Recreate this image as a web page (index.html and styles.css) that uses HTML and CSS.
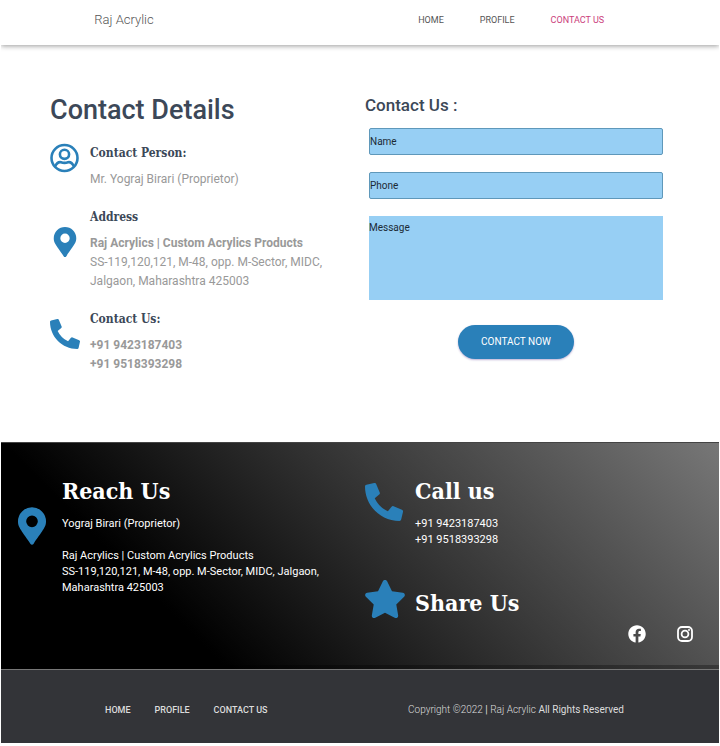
FILE: index.html
```html
<!DOCTYPE html>
<html lang="en">
<head>
<meta charset="utf-8">
<meta name="viewport" content="width=device-width, initial-scale=1">
<title>Raj Acrylic</title>
<link rel="stylesheet" href="styles.css">
</head>
<body>
<svg class="sprite" aria-hidden="true">
  <symbol id="pin" viewBox="0 0 384 512"><path d="M172 502C27 291 0 270 0 192a192 192 0 0 1 384 0c0 78-27 99-172 310a24 24 0 0 1-40 0zM192 272a80 80 0 1 0 0-160 80 80 0 0 0 0 160z"/></symbol>
  <symbol id="phone" viewBox="0 0 512 512"><path d="M18.900 24.500l104-24a24.200 24.200 0 0 1 27.500 13.900l48 112a24 24 0 0 1-6.900 28l-60.600 49.600a370.700 370.700 0 0 0 177.200 177.200l49.600-60.600a24 24 0 0 1 28-6.900l112 48a24.300 24.300 0 0 1 13.800 27.600l-24 104A24 24 0 0 1 464 512C207.900 512 0 304.500 0 48a24 24 0 0 1 18.900-23.500z"/></symbol>
  <symbol id="star" viewBox="20 0 536 512"><path d="M259.300 17.800L194 150.200 47.900 171.500c-26.200 3.800-36.700 36.100-17.700 54.600l105.700 103-25 145.500c-4.500 26.300 23.200 46 46.400 33.700L288 439.600l130.700 68.700c23.200 12.200 50.900-7.400 46.400-33.700l-25-145.500 105.700-103c19-18.500 8.500-50.800-17.700-54.600L382 150.200 316.700 17.800c-11.700-23.600-45.600-23.900-57.400 0z"/></symbol>
</svg>

<header class="topbar">
  <a class="brand" href="#">Raj Acrylic</a>
  <nav class="topnav" aria-label="Main">
    <a href="#">HOME</a>
    <a href="#">PROFILE</a>
    <a class="active" href="#">CONTACT US</a>
  </nav>
</header>

<main class="contact">
  <section class="details">
    <h1>Contact Details</h1>
    <div class="info">
      <svg class="info-icon outline" viewBox="0 0 30 30" aria-hidden="true"><circle cx="14.500" cy="15" r="13"/><circle cx="14.500" cy="11.300" r="4.600"/><path d="M5 23.500c1.500-3.200 4-4.700 6-4.300 2.400.9 4.600.9 7 0 2-.4 4.500 1.100 6 4.300"/></svg>
      <div>
        <h2>Contact Person:</h2>
        <p>Mr. Yograj Birari (Proprietor)</p>
      </div>
    </div>
    <div class="info">
      <svg class="info-icon lower" aria-hidden="true"><use href="#pin"/></svg>
      <div>
        <h2>Address</h2>
        <p><b>Raj Acrylics | Custom Acrylics Products</b><br>SS-119,120,121, M-48, opp. M-Sector, MIDC,<br>Jalgaon, Maharashtra 425003</p>
      </div>
    </div>
    <div class="info">
      <svg class="info-icon low" aria-hidden="true"><use href="#phone"/></svg>
      <div>
        <h2>Contact Us:</h2>
        <p><b>+91 9423187403<br>+91 9518393298</b></p>
      </div>
    </div>
  </section>

  <section class="enquiry">
    <h2>Contact Us :</h2>
    <form>
      <input type="text" placeholder="Name" aria-label="Name">
      <input type="tel" placeholder="Phone" aria-label="Phone">
      <textarea placeholder="Message" aria-label="Message"></textarea>
      <button type="button">CONTACT NOW</button>
    </form>
  </section>
</main>

<section class="reach">
  <div class="block">
    <svg class="reach-icon centred" aria-hidden="true"><use href="#pin"/></svg>
    <div>
      <h2>Reach Us</h2>
      <p>Yograj Birari (Proprietor)<br><br>Raj Acrylics | Custom Acrylics Products<br>SS-119,120,121, M-48, opp. M-Sector, MIDC, Jalgaon, Maharashtra 425003</p>
    </div>
  </div>
  <div class="side">
    <div class="block">
      <svg class="reach-icon" aria-hidden="true"><use href="#phone"/></svg>
      <div>
        <h2>Call us</h2>
        <p>+91 9423187403<br>+91 9518393298</p>
      </div>
    </div>
    <div class="block share">
      <svg class="reach-icon star" aria-hidden="true"><use href="#star"/></svg>
      <h2>Share Us</h2>
    </div>
    <div class="social">
      <a href="#" aria-label="Facebook"><svg viewBox="0 0 512 512"><path d="M504 256C504 119 393 8 256 8S8 119 8 256c0 123.800 90.700 226.400 209.200 245V327.700h-63V256h63v-54.600c0-62.200 37-96.500 93.700-96.500 27.100 0 55.500 4.800 55.500 4.800v61h-31.300c-30.800 0-40.400 19.100-40.400 38.700V256h68.800l-11 71.700h-57.800V501C413.300 482.400 504 379.800 504 256z"/></svg></a>
      <a href="#" aria-label="Instagram"><svg class="line" viewBox="0 0 18 18"><rect x="2" y="2" width="14" height="14" rx="4"/><circle cx="9" cy="9" r="3.400"/><circle class="dot" cx="13" cy="5" r="1"/></svg></a>
    </div>
  </div>
</section>

<footer class="footer">
  <nav aria-label="Footer">
    <a href="#">HOME</a>
    <a href="#">PROFILE</a>
    <a href="#">CONTACT US</a>
  </nav>
  <p>Copyright ©2022 <b>|</b> Raj Acrylic <b>All Rights Reserved</b></p>
</footer>
</body>
</html>
```
FILE: styles.css
```css
* { box-sizing: border-box; }

body {
  margin: 0 1px;
  background: #fff;
  color: #3c4858;
  font-family: Roboto, sans-serif;
}

h1, h2, p { margin: 0; }
a { color: inherit; text-decoration: none; }
.sprite { display: none; }

.topbar {
  display: flex;
  justify-content: space-between;
  padding: 10px 16% 15px 13%;
  box-shadow: 0 1px 5px rgba(0, 0, 0, .4);
}
.brand {
  color: #555;
  font-size: 13px;
  font-weight: 300;
  line-height: 20px;
}
.topnav {
  display: flex;
  gap: 36px;
  color: #555;
  font-size: 9px;
  line-height: 20px;
}
.topnav .active { color: #cb3e7c; }

.contact {
  display: grid;
  grid-template-columns: 315px 1fr;
  padding: 45px 56px 68px 49px;
}

.details h1 {
  margin-bottom: 13px;
  font-size: 27px;
  font-weight: 500;
  line-height: 40px;
}
.info {
  display: flex;
  align-items: flex-start;
  gap: 10px;
}
.info + .info { margin-top: 18px; }
.info-icon {
  flex: none;
  width: 30px;
  height: 30px;
  fill: #2a80b9;
}
.info-icon.outline {
  fill: none;
  stroke: #2a80b9;
  stroke-width: 2.600;
}
.info-icon.low { margin-top: 10px; }
.info-icon.lower { margin-top: 20px; }
.info h2 {
  margin-bottom: 7px;
  font: 700 12px/20px "Roboto Slab", "DejaVu Serif Condensed", "DejaVu Serif", serif;
}
.info p {
  color: #999;
  font-size: 12px;
  line-height: 19px;
}

.enquiry h2 {
  margin: 5px 0 13px;
  font-size: 17px;
  font-weight: 500;
  line-height: 20px;
}
.enquiry form {
  display: flex;
  flex-direction: column;
  gap: 17px;
  margin-left: 4px;
}
.enquiry input,
.enquiry textarea {
  width: 100%;
  margin: 0;
  border: 0;
  background: #97cff4;
  color: #111;
  font: 400 10px/16px Roboto, sans-serif;
}
.enquiry input {
  height: 27px;
  padding: 0;
  border: 1px solid #5f98ba;
  border-radius: 2px;
}
.enquiry textarea {
  display: block;
  height: 84px;
  padding: 4px 0;
  resize: none;
}
.enquiry ::placeholder { color: #1c2a35; opacity: 1; }
.enquiry button {
  align-self: center;
  margin-top: 8px;
  padding: 9px 23px;
  border: 0;
  border-radius: 17px;
  background: #2a80b9;
  box-shadow: 0 1px 2px rgba(90, 60, 150, .4);
  color: #fff;
  font: 400 10px/16px Roboto, sans-serif;
}

.reach {
  display: grid;
  grid-template-columns: 347px 1fr;
  padding: 33px 25px 26px 17px;
  border-top: 1px solid #444;
  background: linear-gradient(45deg, #000 24%, #777);
  box-shadow: inset 0 -4px rgba(0, 0, 0, .3);
  color: #fff;
}
.block {
  display: grid;
  grid-template-columns: 38px 1fr;
  align-items: start;
  column-gap: 12px;
}
.reach > .block {
  grid-template-columns: 28px 1fr;
  column-gap: 16px;
  padding-right: 20px;
}
.reach-icon {
  width: 38px;
  height: 38px;
  margin-top: 7px;
  fill: #2a80b9;
}
.reach-icon.centred {
  width: 28px;
  margin-top: 31px;
}
.reach-icon.star {
  width: 40px;
  margin-top: 0;
}
.reach h2 {
  font: 700 23px/30px "Roboto Slab", "DejaVu Serif Condensed", "DejaVu Serif", serif;
}
.reach p {
  padding-top: 10px;
  font-size: 11px;
  line-height: 16px;
}
.share { margin-top: 32px; }
.share h2 { margin-top: 8px; }
.social {
  display: flex;
  justify-content: flex-end;
  gap: 30px;
  margin-top: 7px;
}
.social svg {
  display: block;
  width: 18px;
  height: 18px;
  fill: #fff;
}
.social .line {
  fill: none;
  stroke: #fff;
  stroke-width: 1.800;
}
.social .dot { fill: #fff; stroke: none; }

.footer {
  display: flex;
  justify-content: space-between;
  padding: 30px 95px 23px 104px;
  border-top: 1px solid #777;
  background: #333438;
  color: #ddd;
  line-height: 20px;
}
.footer nav {
  display: flex;
  gap: 24px;
  font-size: 9px;
  font-weight: 500;
}
.footer p {
  font-size: 10px;
  font-weight: 300;
}
.footer b { font-weight: 400; }
```
